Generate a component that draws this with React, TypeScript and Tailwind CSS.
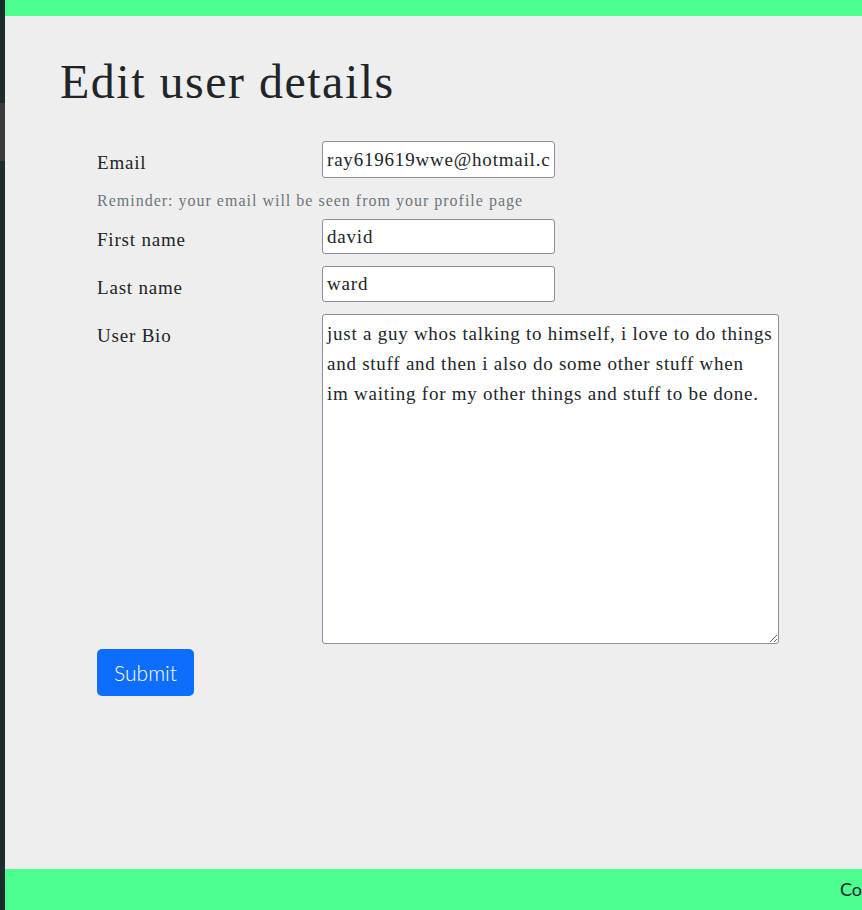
import React from "react";

const serif = { fontFamily: '"Liberation Serif", "DejaVu Serif", serif' };

export default function App() {
  return (
    <div className="flex h-[910px] w-full overflow-hidden bg-[#eeeeee]">
      <div className="flex w-[5px] shrink-0 flex-col bg-[#1d2a2e]">
        <div className="h-[103px]" />
        <div className="h-[58px] bg-[#3b3b3b]" />
      </div>
      <div className="flex min-w-0 flex-1 flex-col">
        <div className="h-[16px] shrink-0 bg-[#4dff91]" />
        <main className="flex-1 text-[#212529]" style={serif}>
          <h1 className="ml-[55px] mt-[36px] text-[48px] leading-[60px] font-normal tracking-[1.5px]">Edit user details</h1>
          <form className="ml-[92px] mt-[29px] flex flex-col" onSubmit={(e) => e.preventDefault()}>
            <div className="flex items-start">
              <label className="w-[225px] pt-[10px] text-[19px] leading-[24px] tracking-[0.8px]">Email</label>
              <input
                className="h-[37px] w-[233px] rounded-[3px] border border-[#8f8d9b] bg-white px-[4px] text-[19px] tracking-[0.8px] outline-none"
                style={serif}
                defaultValue="ray619619wwe@hotmail.com"
              />
            </div>
            <div className="mt-[13px] text-[16px] leading-[20px] tracking-[1px] text-[#6c757d]">Reminder: your email will be seen from your profile page</div>
            <div className="mt-[8px] flex items-start">
              <label className="w-[225px] pt-[9px] text-[19px] leading-[24px] tracking-[0.8px]">First name</label>
              <input
                className="h-[35px] w-[233px] rounded-[3px] border border-[#8f8d9b] bg-white px-[4px] text-[19px] tracking-[0.8px] outline-none"
                style={serif}
                defaultValue="david"
              />
            </div>
            <div className="mt-[12px] flex items-start">
              <label className="w-[225px] pt-[10px] text-[19px] leading-[24px] tracking-[0.8px]">Last name</label>
              <input
                className="h-[36px] w-[233px] rounded-[3px] border border-[#8f8d9b] bg-white px-[4px] text-[19px] tracking-[0.8px] outline-none"
                style={serif}
                defaultValue="ward"
              />
            </div>
            <div className="mt-[12px] flex items-start">
              <label className="w-[225px] pt-[10px] text-[19px] leading-[24px] tracking-[0.8px]">User Bio</label>
              <textarea
                className="h-[330px] w-[457px] rounded-[3px] border border-[#8f8d9b] bg-white px-[4px] py-[4px] text-[19px] leading-[30px] tracking-[0.75px] outline-none"
                style={serif}
                defaultValue={"just a guy whos talking to himself, i love to do things\nand stuff and then i also do some other stuff when\nim waiting for my other things and stuff to be done."}
              />
            </div>
            <div className="mt-[5px]">
              <button
                type="submit"
                className="h-[47px] w-[97px] rounded-[5px] bg-[#0d6efd] text-[21px] text-white"
                style={{ fontFamily: 'Lato, "Open Sans", sans-serif', fontWeight: 300 }}
              >
                Submit
              </button>
            </div>
          </form>
        </main>
        <footer className="flex h-[41px] shrink-0 items-center overflow-hidden bg-[#4dff91] text-[#212529]">
          <div className="ml-[835px] whitespace-nowrap text-[18px]" style={{ fontFamily: 'Lato, sans-serif' }}>
            Copyright 2023
          </div>
        </footer>
      </div>
    </div>
  );
}
